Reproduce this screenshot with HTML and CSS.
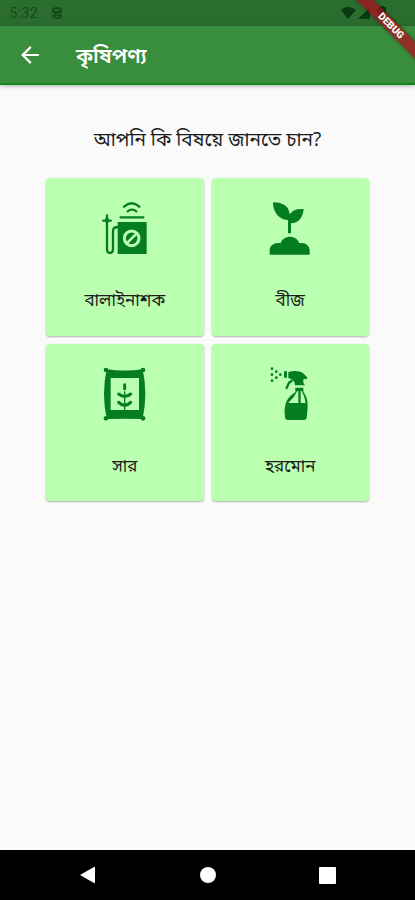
FILE: index.html
```html
<!DOCTYPE html>
<html lang="bn">
<head>
<meta charset="utf-8">
<meta name="viewport" content="width=device-width, initial-scale=1">
<title>কৃষিপণ্য</title>
<link rel="stylesheet" href="styles.css">
</head>
<body>
<div class="status">
  <span class="time">5:32</span>
  <svg class="status-app" viewBox="0 0 12 14" aria-hidden="true"><path d="M2 5C2 1 10 1 10 5M1 6H11M3 8C5 9 10 8 10 10M2 9C2 13 10 13 10 10" /></svg>
  <svg class="status-icons" viewBox="0 0 50 16" aria-hidden="true"><path d="M1 5Q8-1 16 5L8 14ZM18 14L30 2V14ZM38 2h2V1h4v1h2v12h-8Z"/></svg>
</div>
<header class="bar">
  <button class="back" type="button" aria-label="Back"><svg viewBox="3 3 18 18"><path d="M20 11H7.83l5.59-5.59L12 4l-8 8 8 8 1.41-1.41L7.83 13H20v-2z"/></svg></button>
  <h1>কৃষিপণ্য</h1>
</header>
<div class="debug"><span>DEBUG</span></div>
<main>
  <p class="question">আপনি কি বিষয়ে জানতে চান?</p>
  <div class="grid">
    <button class="card" type="button">
      <svg viewBox="-13 0 240 240" aria-hidden="true">
        <path class="line" d="M104 50Q127 30 150 50" stroke-width="7"/>
        <path class="line" d="M115 64Q128 54 141 64" stroke-width="7"/>
        <path class="line" d="M94 82H162M42 92H64M53 76V177C53 193 71 193 71 177V123Q71 111 86 111" stroke-width="7"/>
        <path class="line" d="M53 88V94" stroke-width="11"/>
        <path d="M85 96H172V192H85Z"/>
        <circle class="cut" cx="127" cy="145" r="22" stroke-width="9"/>
        <path class="cut" d="M112 160L142 130" stroke-width="8"/>
      </svg>
      <span>বালাইনাশক</span>
    </button>
    <button class="card" type="button">
      <svg viewBox="3 0 240 240" aria-hidden="true">
        <path d="M72 37C98 37 120 46 122 73C132 59 146 56 164 57C162 83 149 99 126 100V130H117V91C89 88 72 67 72 37Z"/>
        <path d="M62 194V179C62 165 80 155 95 160C102 134 143 134 151 160C167 155 182 166 182 181V194Z"/>
      </svg>
      <span>বীজ</span>
    </button>
    <button class="card" type="button">
      <svg viewBox="-13 3 240 240" aria-hidden="true">
        <path fill-rule="evenodd" d="M52 43Q107 50 160 43Q176 115 160 192Q107 190 52 192Q36 115 52 43ZM64 69V165H149V69Z"/>
        <circle cx="50" cy="45" r="7"/><circle cx="161" cy="45" r="7"/><circle cx="50" cy="190" r="7"/><circle cx="161" cy="190" r="7"/>
        <path class="line" d="M106 89V101" stroke-width="9"/>
        <path class="line" d="M106 110V165" stroke-width="4"/>
        <path class="line" d="M88 117Q106 132 124 117M88 142Q106 160 124 142" stroke-width="9"/>
      </svg>
      <span>সার</span>
    </button>
    <button class="card" type="button">
      <svg viewBox="3 3 240 240" aria-hidden="true">
        <path d="M105 49H114V68H105ZM118 51Q145 44 161 53L174 66V72H164Q160 82 168 91H138Q137 73 118 69Z"/>
        <path class="line" d="M128 77Q124 82 120 83L113 99" stroke-width="7"/>
        <circle cx="69" cy="41" r="4"/><circle cx="69" cy="59" r="4"/><circle cx="69" cy="77" r="4"/><circle cx="82" cy="50" r="4"/><circle cx="82" cy="68" r="4"/><circle cx="94" cy="59" r="4"/>
        <path fill-rule="evenodd" d="M139 98H163V110C169 119 176 130 176 149Q176 167 173 189Q172 195 165 195H117Q109 195 108 187Q104 165 110 145Q119 123 139 112ZM145 108Q136 127 118 144H148V108ZM155 108V144H170Q168 126 158 108Z"/>
      </svg>
      <span>হরমোন</span>
    </button>
  </div>
</main>
<nav class="nav">
  <button type="button" aria-label="Back"><svg viewBox="0 0 18 18"><path d="M1 9L15 1Q16 0 16 2V16Q16 18 15 17Z"/></svg></button>
  <button type="button" aria-label="Home"><svg viewBox="0 0 18 18"><circle cx="9" cy="9" r="8"/></svg></button>
  <button type="button" aria-label="Overview"><svg viewBox="0 0 18 18"><rect x="1" y="1" width="17" height="17" rx="1"/></svg></button>
</nav>
</body>
</html>
```
FILE: styles.css
```css
* { box-sizing: border-box; }
body {
  margin: 0;
  min-height: 100vh;
  display: flex;
  flex-direction: column;
  position: relative;
  overflow-x: hidden;
  background: #fafafa;
  color: #1c1c1c;
  font-family: "Noto Sans", "Noto Sans Bengali", Roboto, sans-serif;
}
button { border: 0; padding: 0; background: none; color: inherit; font: inherit; cursor: pointer; }
.status {
  height: 26px;
  padding: 0 25px 0 9px;
  display: flex;
  align-items: center;
  gap: 13px;
  background: #2a6d2e;
  color: #174a1b;
  font: 15px/26px Roboto, sans-serif;
}
.status-app { width: 12px; height: 14px; fill: none; stroke: #174a1b; stroke-width: 2; }
.status-icons { width: 50px; height: 16px; margin-left: auto; fill: #083910; }
.bar {
  height: 59px;
  padding: 0 20px;
  display: flex;
  align-items: center;
  gap: 36px;
  background: #388e3c;
  border-bottom: 2px solid #148518;
  box-shadow: 0 1px 4px rgba(0, 0, 0, .3);
  color: #fff;
}
.back { display: flex; }
.back svg { width: 20px; height: 20px; fill: #fff; }
h1 { margin: 0; font-size: 21px; line-height: 28px; font-weight: 600; }
.debug {
  position: absolute;
  top: 0;
  right: 0;
  width: 64px;
  height: 64px;
  overflow: hidden;
}
.debug span {
  position: absolute;
  top: 20px;
  left: -8px;
  width: 96px;
  transform: rotate(45deg);
  background: rgba(170, 15, 28, .75);
  box-shadow: 0 0 4px rgba(0, 0, 0, .4);
  color: #fff;
  font: 900 10px/12px Roboto, sans-serif;
  text-align: center;
}
main { flex: 1; padding: 40px 46px; }
.question { margin: 0 0 24px; font-size: 19px; line-height: 29px; text-align: center; }
.grid { display: grid; grid-template-columns: 1fr 1fr; gap: 8px; }
.card {
  aspect-ratio: 1;
  padding-top: 12px;
  display: flex;
  flex-direction: column;
  align-items: center;
  gap: 18px;
  border-radius: 4px;
  background: #bbffb0;
  box-shadow: 0 1px 2px rgba(0, 0, 0, .3);
  font-size: 17px;
  line-height: 24px;
}
.card svg { width: 80px; height: 80px; fill: #047d20; }
.card .line { fill: none; stroke: #047d20; stroke-linecap: round; }
.card .cut { fill: none; stroke: #bbffb0; }
.nav {
  height: 50px;
  padding: 0 28px;
  display: flex;
  background: #000;
}
.nav button { flex: 1; display: flex; align-items: center; justify-content: center; }
.nav svg { width: 18px; height: 18px; fill: #fff; }
```
